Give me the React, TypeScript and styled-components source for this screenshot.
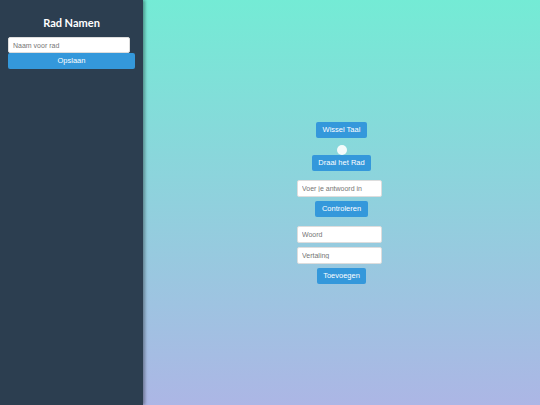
import React from "react";
import styled, { createGlobalStyle } from "styled-components";

const GlobalStyle = createGlobalStyle`
  html, body {
    margin: 0;
    padding: 0;
    height: 100%;
  }
  body {
    font-family: "Liberation Sans", Arial, sans-serif;
  }
  #root {
    height: 100%;
  }
`;

const Layout = styled.div`
  display: flex;
  height: 405px;
`;

const Sidebar = styled.aside`
  width: 127px;
  padding: 8px;
  background: #2c3e50;
  color: #fff;
  box-shadow: 2px 0 3px rgba(0, 0, 0, 0.35);
  position: relative;
  z-index: 1;
  flex-shrink: 0;
`;

const Title = styled.h2`
  margin: 8px 0 8px;
  text-align: center;
  font-family: Lato, "Liberation Sans", sans-serif;
  font-size: 11px;
  font-weight: 700;
  line-height: 13px;
`;

const SideInput = styled.input`
  display: block;
  box-sizing: border-box;
  width: 122px;
  height: 16px;
  margin: 0;
  padding: 0 4px;
  border: 1px solid #ddd;
  border-radius: 2px;
  font-family: "Liberation Sans", Arial, sans-serif;
  font-size: 7px;
  color: #333;
  outline: none;

  &::placeholder {
    color: #757575;
  }
`;

const Button = styled.button<{ $wide?: boolean }>`
  display: block;
  box-sizing: border-box;
  height: 16px;
  width: ${(p) => (p.$wide ? "100%" : "auto")};
  padding: 0 6.5px;
  border: none;
  border-radius: 2px;
  background: #3498db;
  color: #fff;
  font-family: "Liberation Sans", Arial, sans-serif;
  font-size: 7.5px;
  line-height: 16px;
  cursor: pointer;
`;

const Main = styled.main`
  flex: 1;
  display: flex;
  flex-direction: column;
  align-items: center;
  justify-content: center;
  background: linear-gradient(to bottom, #74ebd5, #acb6e5);
`;

const Stack = styled.div<{ $gap: number; $top?: number }>`
  display: flex;
  flex-direction: column;
  align-items: center;
  gap: ${(p) => p.$gap}px;
  margin-top: ${(p) => p.$top ?? 0}px;
`;

const Dot = styled.div`
  width: 10px;
  height: 10px;
  border-radius: 50%;
  background: #f4fbfb;
  margin: 7px 0 0;
`;

const Field = styled.input`
  display: block;
  box-sizing: border-box;
  width: 85px;
  height: 17px;
  margin: 0 4px 0 0;
  padding: 0 4px;
  border: 1px solid #ddd;
  border-radius: 2px;
  background: #fff;
  font-family: "Liberation Sans", Arial, sans-serif;
  font-size: 7px;
  outline: none;

  &::placeholder {
    color: #757575;
  }
`;

function App() {
  const [naam, setNaam] = React.useState("");
  const [antwoord, setAntwoord] = React.useState("");
  const [woord, setWoord] = React.useState("");
  const [vertaling, setVertaling] = React.useState("");

  return (
    <>
      <GlobalStyle />
      <Layout>
        <Sidebar>
          <Title>Rad Namen</Title>
          <SideInput
            placeholder="Naam voor rad"
            value={naam}
            onChange={(e) => setNaam(e.target.value)}
          />
          <Button $wide>Opslaan</Button>
        </Sidebar>
        <Main>
          <Stack $gap={0}>
            <Button>Wissel Taal</Button>
            <Dot />
            <Button>Draai het Rad</Button>
          </Stack>
          <Stack $gap={4} $top={9}>
            <Field
              placeholder="Voer je antwoord in"
              value={antwoord}
              onChange={(e) => setAntwoord(e.target.value)}
            />
            <Button>Controleren</Button>
          </Stack>
          <Stack $gap={4} $top={9}>
            <Field
              placeholder="Woord"
              value={woord}
              onChange={(e) => setWoord(e.target.value)}
            />
            <Field
              placeholder="Vertaling"
              value={vertaling}
              onChange={(e) => setVertaling(e.target.value)}
            />
            <Button>Toevoegen</Button>
          </Stack>
        </Main>
      </Layout>
    </>
  );
}

export default App;
